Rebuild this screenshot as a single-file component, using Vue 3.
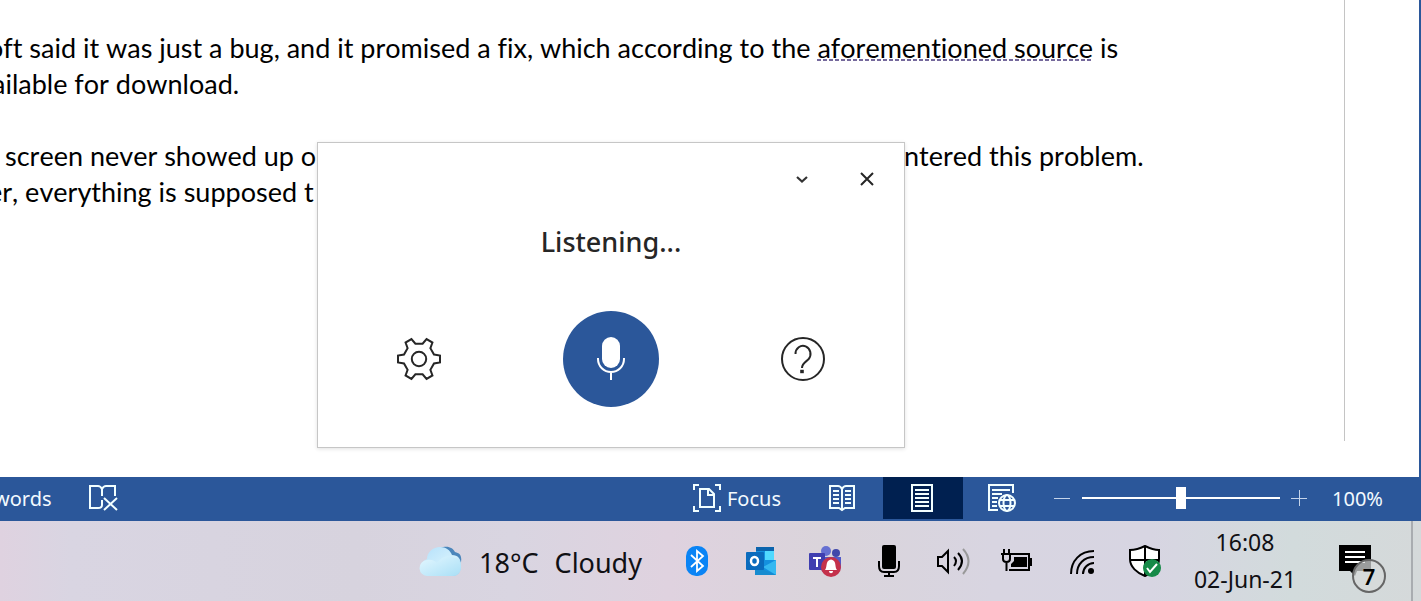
<script setup>
import { ref } from 'vue'

const zoom = ref(50)

const gear = (() => {
  const tooth = [[15, -4.5], [21, -3.4], [21, 3.4], [15, 4.5]]
  const points = []
  for (let i = 0; i < 6; i++) {
    const a = (i * Math.PI) / 3
    for (const [x, y] of tooth) {
      const px = 23 + x * Math.cos(a) - y * Math.sin(a)
      const py = 23 + x * Math.sin(a) + y * Math.cos(a)
      points.push(`${px.toFixed(2)},${py.toFixed(2)}`)
    }
  }
  return points.join(' ')
})()
</script>

<template>
  <div class="screen">
    <main class="document">
      <article class="page">
        <p class="line">oft said it was just a bug, and it promised a fix, which according to the <span class="hint">aforementioned source</span> is</p>
        <p class="line tail">ailable for download.</p>
        <p class="line split">
          <span class="indented">screen never showed up o</span>
          <span>ntered this problem.</span>
        </p>
        <p class="line">er, everything is supposed t</p>
      </article>

      <section class="dictation" aria-label="Dictation">
        <header class="dictation-head">
          <button type="button" aria-label="Minimize">
            <svg width="14" height="14" viewBox="0 0 14 14"><path d="M2 5l5 4.500 5-4.500" fill="none" stroke="#333" stroke-width="2.200" /></svg>
          </button>
          <button type="button" aria-label="Close">
            <svg width="14" height="14" viewBox="0 0 14 14"><path d="M1 1l12 12M13 1L1 13" fill="none" stroke="#262626" stroke-width="2" /></svg>
          </button>
        </header>
        <h1>Listening...</h1>
        <div class="dictation-controls">
          <button type="button" aria-label="Settings">
            <svg width="46" height="46" viewBox="0 0 46 46" fill="none" stroke="#262626" stroke-width="2">
              <polygon :points="gear" />
              <circle cx="23" cy="23" r="7.200" />
            </svg>
          </button>
          <button type="button" class="mic" aria-label="Microphone">
            <svg width="32" height="46" viewBox="0 0 32 46">
              <rect x="7" y="1" width="18" height="31" rx="9" fill="#fff" />
              <path d="M3 22v1a13 13 0 0 0 26 0v-1M16 36v8" fill="none" stroke="#fff" stroke-width="2" />
            </svg>
          </button>
          <button type="button" aria-label="Help">
            <svg width="46" height="46" viewBox="0 0 46 46" fill="none" stroke="#262626" stroke-width="2">
              <circle cx="23" cy="23" r="21" />
              <path d="M15.500 18a7.500 8 0 1 1 13 5.300c-2.800 2.700-6.500 4.200-6.500 8.700" />
              <path d="M20.200 35.500h3.600" stroke-width="3.400" />
            </svg>
          </button>
        </div>
      </section>
    </main>

    <footer class="status">
      <button type="button" class="words">words</button>
      <button type="button" class="proof" aria-label="Proofing">
        <svg width="30" height="28" viewBox="0 0 30 28" fill="none" stroke="#f2ffff" stroke-width="2">
          <path d="M14 5c-1-2-2-3-4-3H2v22h8c2 0 4 0 4-3v-5M14 12V5c1-2 2-3 4-3h9v10" />
          <path d="M16 14l13 12M29 14L16 26" />
        </svg>
      </button>
      <span class="spacer"></span>
      <button type="button" class="focus">
        <svg width="28" height="28" viewBox="0 0 28 28" fill="none" stroke="#f2ffff" stroke-width="2">
          <path d="M1 6V1h5M22 1h5v5M27 22v5h-5M6 27H1v-5" />
          <path d="M7 5h9l5 5v13H7zM15 5v6h6" />
        </svg>
        Focus
      </button>
      <button type="button" class="view" aria-label="Read Mode">
        <svg width="28" height="28" viewBox="0 0 28 28" fill="none" stroke="#f2ffff" stroke-width="2">
          <path d="M14 5c-1-2-2-3-4-3H2v22h9l3 2 3-2h9V2h-8c-2 0-3 1-4 3zM14 5v20M5 7h6M5 11h6M5 15h6M5 19h6M17 7h6M17 11h6M17 15h6M17 19h6" />
        </svg>
      </button>
      <button type="button" class="view active" aria-label="Print Layout">
        <svg width="24" height="28" viewBox="0 0 24 28" fill="none" stroke="#f2ffff" stroke-width="2">
          <path d="M2 1h20v26H2zM5 6h14M5 10h14M5 14h14M5 18h14M5 22h14" />
        </svg>
      </button>
      <button type="button" class="view" aria-label="Web Layout">
        <svg width="30" height="28" viewBox="0 0 30 28" fill="none" stroke="#f2ffff" stroke-width="2">
          <path d="M26 9V1H2v25h9M5 6h18M5 10h10M5 14h6M5 18h5M5 22h5" />
          <circle cx="20" cy="19" r="8" />
          <ellipse cx="20" cy="19" rx="3.500" ry="8" />
          <path d="M13 16h14M13 22h14" />
        </svg>
      </button>
      <button type="button" class="step" aria-label="Zoom out">
        <svg width="16" height="16" viewBox="0 0 16 16"><path d="M0 8.500h16" stroke="#c5d4ea" /></svg>
      </button>
      <input v-model="zoom" type="range" min="0" max="100" aria-label="Zoom" />
      <button type="button" class="step" aria-label="Zoom in">
        <svg width="16" height="16" viewBox="0 0 16 16"><path d="M0 8.500h16M8.500 0v16" stroke="#c5d4ea" /></svg>
      </button>
      <button type="button" class="percent">100%</button>
    </footer>

    <nav class="taskbar" aria-label="Taskbar">
      <button type="button" class="weather">
        <svg width="46" height="32" viewBox="0 0 46 32">
          <defs>
            <linearGradient id="cloud" x1="0" y1="0" x2="1" y2="1">
              <stop offset="0" stop-color="#b4e0fb" />
              <stop offset=".6" stop-color="#d3f0fc" />
              <stop offset="1" stop-color="#8fcdf0" />
            </linearGradient>
            <linearGradient id="cloudFront" x1="0" y1="0" x2="1" y2="1">
              <stop offset="0" stop-color="#e4f7ff" />
              <stop offset="1" stop-color="#a9dff6" />
            </linearGradient>
          </defs>
          <path d="M23 2c8-3 13 0 15 4 5 1 7 4 6 10l-6 4-17-8z" fill="#4b86bb" />
          <path d="M11 30a9 9 0 0 1-1-17C10 6 16 1 23 1c6 0 10 3 12 8 6 0 9 4 9 10 0 7-3 11-8 11z" fill="url(#cloud)" />
          <path d="M11 30a8 8 0 0 1-1-16c5-1 8 1 10 3 4-5 9-8 15-6 6 1 9 5 9 10 0 6-4 9-9 9z" fill="url(#cloudFront)" />
        </svg>
        <span>18°C</span><span>Cloudy</span>
      </button>
      <button type="button" class="tray" aria-label="Bluetooth">
        <svg width="24" height="32" viewBox="0 0 24 32">
          <rect x="1" y="1" width="22" height="30" rx="10" fill="#0a84f5" />
          <path d="M6 10l12 11-6 5V6l6 5L6 22" fill="none" stroke="#fff" stroke-width="1.800" />
        </svg>
      </button>
      <button type="button" class="tray" aria-label="Outlook">
        <svg width="30" height="30" viewBox="0 0 30 30">
          <path d="M10 1h18v14H10z" fill="#50d9ff" />
          <path d="M10 1h18v4H10z" fill="#0b64ad" />
          <path d="M10 5h9v10h-9z" fill="#1490df" />
          <path d="M9 14h21v15H9z" fill="#1490df" />
          <path d="M30 14v15L17 21z" fill="#35b8f1" />
          <path d="M9 20l21 9H9z" fill="#168bd0" />
          <rect y="6" width="18" height="18" rx="1" fill="#0a6bbd" />
          <ellipse cx="8.500" cy="15" rx="3.500" ry="4" fill="none" stroke="#fff" stroke-width="2.500" />
        </svg>
      </button>
      <button type="button" class="tray" aria-label="Teams">
        <svg width="32" height="32" viewBox="0 0 32 32">
          <circle cx="17" cy="6" r="5" fill="#6670d2" />
          <circle cx="27" cy="8" r="4" fill="#4048aa" />
          <path d="M10 12h22v9c0 11-20 12-21 0z" fill="#5059c9" />
          <rect y="8" width="16" height="17" rx="1" fill="#3f3eb0" />
          <path d="M4 13h8M8 13v9" stroke="#fff" stroke-width="2" />
          <circle cx="22" cy="22" r="10" fill="#c4314b" />
          <path d="M16 25c2-2 1-7 3-9 2-2 4-2 6 0 2 2 1 7 3 9zM20 26h4c0 3-4 3-4 0z" fill="#fff" />
        </svg>
      </button>
      <button type="button" class="tray" aria-label="Microphone in use">
        <svg width="24" height="34" viewBox="0 0 24 34">
          <rect x="5" y="1" width="14" height="24" rx="2" />
          <path d="M2 17v5c0 4 2 6 5 6h10c3 0 5-2 5-6v-5M12 28v4M7 32h10" fill="none" stroke="#000" stroke-width="2" />
        </svg>
      </button>
      <button type="button" class="tray" aria-label="Volume">
        <svg width="34" height="28" viewBox="0 0 34 28" fill="none" stroke="#000" stroke-width="2">
          <path d="M2 10h4l6-6v21l-6-6H2zM18 10q4 4 0 9M22 6q8 8 0 17" />
          <path d="M27 2q11 12 0 25" stroke="#999" />
        </svg>
      </button>
      <button type="button" class="tray" aria-label="Battery charging">
        <svg width="32" height="24" viewBox="0 0 32 24">
          <path d="M11 5h17v16H8M30 9v8" fill="none" stroke="#000" stroke-width="2" />
          <path d="M13 8h13v10H10v-3l3-3z" />
          <path d="M3 0v5M8 0v5M0 5h11M2 6v4c0 4 7 4 7 0V6M5.500 13v9" fill="none" stroke="#000" stroke-width="2" />
        </svg>
      </button>
      <button type="button" class="tray" aria-label="Wi-Fi">
        <svg width="30" height="30" viewBox="-4 -4 30 30" fill="none" stroke="#000" stroke-width="2">
          <path d="M1 24C1 11 10 1 24 1M7 24C7 14 14 7 24 7M13 24c0-6 5-11 11-11" />
          <circle cx="21" cy="21" r="3" fill="#000" stroke="none" />
        </svg>
      </button>
      <button type="button" class="tray" aria-label="Windows Security">
        <svg width="32" height="34" viewBox="0 0 32 34">
          <path d="M1 6c6 0 11-2 15-4 4 2 9 4 14 4v9c0 8-7 14-14 17C8 29 1 23 1 15z" fill="#fff" stroke="#000" stroke-width="2" />
          <path d="M16 2v30M1 16h29" stroke="#000" stroke-width="2" />
          <circle cx="23" cy="24" r="9" fill="#168a48" />
          <path d="M18 24l3 4 7-8" fill="none" stroke="#fff" stroke-width="2" />
        </svg>
      </button>
      <button type="button" class="clock"><span>16:08</span><span>02-Jun-21</span></button>
      <button type="button" class="notices" aria-label="7 notifications">
        <svg width="32" height="32" viewBox="0 0 32 32">
          <path d="M0 0h32v26H18l-2 5-5-5H0z" />
          <path d="M6 7h20M6 12h20M6 17h20" stroke="#fff" stroke-width="2" />
        </svg>
        <span class="badge">7</span>
      </button>
      <button type="button" class="desktop" aria-label="Show desktop"></button>
    </nav>
  </div>
</template>

<style>
body {
  margin: 0;
}
</style>

<style scoped>
.screen {
  display: flex;
  flex-direction: column;
  min-height: 100vh;
  overflow: hidden;
  background: #fff;
  font-family: "Noto Sans", "Open Sans", sans-serif;
}
button {
  display: flex;
  align-items: center;
  justify-content: center;
  margin: 0;
  padding: 0;
  border: 0;
  background: none;
  color: inherit;
  font: inherit;
  white-space: nowrap;
}
svg {
  display: block;
  flex: none;
}
.document {
  position: relative;
  display: flex;
  flex: 1;
  padding: 0 74px 36px 0;
  border-right: 2px solid #2b579a;
}
.page {
  flex: 1;
  min-width: 0;
  padding-top: 30px;
  border-right: 1px solid #c4c4c4;
  overflow: hidden;
  color: #000;
  font-family: Lato, sans-serif;
  font-size: 27px;
  font-kerning: none;
  font-variant-ligatures: none;
  line-height: 36px;
}
.line {
  margin: 0 0 0 -12px;
  white-space: nowrap;
}
.tail {
  padding-left: 4px;
}
.split {
  display: grid;
  grid-template-columns: 916px 1fr;
  margin-top: 36px;
}
.indented {
  padding-left: 17px;
}
.hint {
  background: repeating-linear-gradient(90deg, #75699c 0 4px, transparent 4px 6px) left bottom 3px / 100% 2px no-repeat;
}
.dictation {
  position: absolute;
  top: 142px;
  left: 317px;
  box-sizing: border-box;
  width: 588px;
  padding: 4px 5px 40px;
  border: 1px solid #c6c6c6;
  background: #fff;
  box-shadow: 0 1px 4px rgba(0, 0, 0, 0.12);
  color: #262626;
}
.dictation-head {
  display: flex;
  justify-content: flex-end;
}
.dictation-head button {
  width: 65px;
  height: 64px;
}
h1 {
  margin: 11px 0 49px;
  font-size: 27px;
  font-weight: 500;
  line-height: 40px;
  text-align: center;
}
.dictation-controls {
  display: grid;
  grid-template-columns: repeat(3, 192px);
  justify-content: center;
  justify-items: center;
  align-items: center;
}
.mic {
  width: 96px;
  height: 96px;
  border-radius: 50%;
  background: #2b579a;
}
.status {
  display: flex;
  align-items: stretch;
  box-sizing: border-box;
  height: 44px;
  padding-bottom: 2px;
  background: #2b579a;
  color: #f2faff;
  font-size: 20px;
}
.words {
  margin-left: -6px;
}
.proof {
  margin-left: 36px;
}
.spacer {
  flex: 1;
}
.focus {
  gap: 6px;
  padding-right: 22px;
}
.view {
  width: 80px;
  padding-right: 2px;
}
.active {
  background: #002050;
}
.step {
  width: 38px;
}
input[type="range"] {
  appearance: none;
  width: 198px;
  margin: 0 0 0 1px;
  background: linear-gradient(#fff, #fff) center / 100% 2px no-repeat;
}
input[type="range"]::-webkit-slider-thumb {
  appearance: none;
  width: 10px;
  height: 22px;
  background: #fff;
}
.percent {
  width: 79px;
  margin-right: 24px;
}
.taskbar {
  display: flex;
  justify-content: flex-end;
  height: 80px;
  background: linear-gradient(90deg, #dfd2e0 0, #d9d5e2 5%, #d7d3de 25%, #d9d5e1 36%, #dfd2df 47%, #dad4db 58%, #d8d5e1 70%, #d7d5e2 81%, #d2dbdc 91%, #d5d9da 100%);
  color: #101014;
}
.weather {
  gap: 16px;
  padding: 2px 23px 0 0;
  font-size: 27px;
}
.tray {
  width: 64px;
}
.clock {
  flex-direction: column;
  width: 136px;
  font-size: 23px;
  line-height: 37px;
}
.notices {
  position: relative;
  width: 98px;
  padding-right: 14px;
}
.badge {
  position: absolute;
  top: 38px;
  left: 39px;
  box-sizing: border-box;
  width: 34px;
  height: 34px;
  border: 2px solid #666;
  border-radius: 50%;
  background: rgba(215, 218, 218, 0.72);
  color: #000;
  font-size: 22px;
  font-weight: 600;
  line-height: 30px;
  text-align: center;
}
.desktop {
  width: 10px;
  border-left: 2px solid #a9acb0;
}
</style>
